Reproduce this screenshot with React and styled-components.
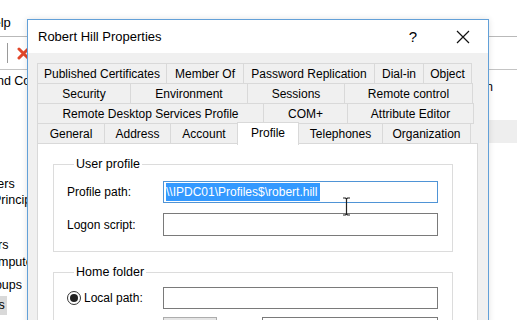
import React from 'react';
import styled, { createGlobalStyle } from 'styled-components';

const GlobalStyle = createGlobalStyle`
  html, body {
    margin: 0;
    padding: 0;
    background: #ffffff;
    overflow: hidden;
  }
  * {
    box-sizing: border-box;
  }
`;

const tabRows = [
  [
    { label: 'Published Certificates', w: 130 },
    { label: 'Member Of', w: 78 },
    { label: 'Password Replication', w: 132 },
    { label: 'Dial-in', w: 50 },
    { label: 'Object', w: 49 },
  ],
  [
    { label: 'Security', w: 94 },
    { label: 'Environment', w: 118 },
    { label: 'Sessions', w: 98 },
    { label: 'Remote control', w: 129 },
  ],
  [
    { label: 'Remote Desktop Services Profile', w: 227 },
    { label: 'COM+', w: 85 },
    { label: 'Attribute Editor', w: 127 },
  ],
  [
    { label: 'General', w: 68 },
    { label: 'Address', w: 67 },
    { label: 'Account', w: 68 },
    { label: 'Profile', w: 62, active: true },
    { label: 'Telephones', w: 85 },
    { label: 'Organization', w: 89 },
  ],
];

// tree rows of the window behind the dialog; most of each name is hidden
const treeItems = [
  { text: 'and Computers', indent: -12, gap: 3 },
  { text: 'Users', indent: -20, gap: 87 },
  { text: 'Principals', indent: -9, gap: 0 },
  { text: 'Controllers', indent: -54, gap: 29 },
  { text: 'Computers', indent: -20, gap: 1 },
  { text: 'Groups', indent: -21, gap: 7 },
  { text: 'Users', indent: -30, gap: 3, selected: true },
];

function App() {
  return (
    <>
      <GlobalStyle />
      <Screen>
        <BackWindow>
          <MenuBar>
            <MenuItem>Action</MenuItem>
            <MenuItem>View</MenuItem>
            <MenuItem>Help</MenuItem>
          </MenuBar>
          <ToolBar>
            <ToolSep />
            <DeleteIcon width="13" height="13" viewBox="0 0 13 13">
              <path d="M2 2 L11 11 M11 2 L2 11" stroke="#e2472a" strokeWidth="3" strokeLinecap="round" />
            </DeleteIcon>
          </ToolBar>
          <Panes>
            <TreePane>
              {treeItems.map((it, i) => (
                <TreeRow key={i} gap={it.gap} selected={it.selected}>
                  <TreeText indent={it.indent} selected={it.selected}>{it.text}</TreeText>
                </TreeRow>
              ))}
            </TreePane>
            <ListPane>
              <ListHeader>
                <HeaderCell w={120}>Name</HeaderCell>
                <HeaderCell w={103}>Type</HeaderCell>
                <HeaderCell>Description</HeaderCell>
              </ListHeader>
              <ListRow />
              <ListRow selected />
            </ListPane>
          </Panes>
        </BackWindow>

        <Dialog>
          <TitleBar>
            <Title>Robert Hill Properties</Title>
            <TitleButton>?</TitleButton>
            <TitleButton>
              <svg width="14" height="14" viewBox="0 0 14 14">
                <path d="M1 1 L13 13 M13 1 L1 13" stroke="#111" strokeWidth="1.2" />
              </svg>
            </TitleButton>
          </TitleBar>
          <Body>
            <Tabs>
              {tabRows.map((row, r) => (
                <TabRow key={r}>
                  {row.map((t) => (
                    <Tab key={t.label} w={t.w} active={t.active}>
                      {t.label}
                    </Tab>
                  ))}
                </TabRow>
              ))}
            </Tabs>
            <Panel>
              <Group>
                <Legend>User profile</Legend>
                <FieldRow>
                  <FieldLabel>Profile path:</FieldLabel>
                  <TextBox focused>
                    <Selected>\\IPDC01\Profiles$\robert.hill</Selected>
                  </TextBox>
                </FieldRow>
                <FieldRow tall>
                  <FieldLabel>Logon script:</FieldLabel>
                  <TextBox />
                </FieldRow>
              </Group>
              <Group home>
                <Legend>Home folder</Legend>
                <FieldRow>
                  <RadioLabel>
                    <Radio checked />
                    Local path:
                  </RadioLabel>
                  <TextBox />
                </FieldRow>
                <FieldRow>
                  <RadioLabel>
                    <Radio />
                    Connect:
                  </RadioLabel>
                  <DriveBox />
                  <ToLabel>To:</ToLabel>
                  <TextBox w={176} />
                </FieldRow>
              </Group>
            </Panel>
          </Body>
        </Dialog>

        <IBeam width="9" height="19" viewBox="0 0 9 19">
          <path d="M1 1 H3.5 L4.5 2 L5.5 1 H8 M4.5 2 V17 M1 18 H3.5 L4.5 17 L5.5 18 H8" stroke="#222" strokeWidth="1.2" fill="none" />
        </IBeam>
      </Screen>
    </>
  );
}

const Screen = styled.div`
  position: relative;
  width: 517px;
  height: 320px;
  overflow: hidden;
  font-family: 'Liberation Sans', Arial, sans-serif;
  font-size: 12px;
  color: #000;
`;

const BackWindow = styled.div`
  width: 517px;
  height: 320px;
  display: flex;
  flex-direction: column;
  background: #fff;
`;

const MenuBar = styled.div`
  height: 37px;
  display: flex;
  align-items: center;
  gap: 12px;
  padding-top: 8px;
  margin-left: -104px;
  border-bottom: 1px solid #b9b9b9;
  font-size: 13px;
`;

const MenuItem = styled.span`
  white-space: nowrap;
`;

const ToolBar = styled.div`
  height: 33px;
  display: flex;
  align-items: center;
  padding-left: 7px;
  gap: 9px;
  border-bottom: 1px solid #c4c4c4;
`;

const ToolSep = styled.div`
  width: 1px;
  height: 20px;
  background: #9a9a9a;
`;

const DeleteIcon = styled.svg`
  display: block;
`;

const Panes = styled.div`
  flex: 1;
  display: flex;
`;

const TreePane = styled.div`
  width: 210px;
  display: flex;
  flex-direction: column;
  overflow: hidden;
  font-size: 12.5px;
`;

const TreeRow = styled.div`
  height: ${(p) => (p.selected ? 19 : 16)}px;
  margin-top: ${(p) => p.gap}px;
  display: flex;
  align-items: center;
`;

const TreeText = styled.span`
  margin-left: ${(p) => p.indent}px;
  padding: 0 2px;
  white-space: nowrap;
  line-height: 19px;
  background: ${(p) => (p.selected ? '#d9d9d9' : 'transparent')};
`;

const ListPane = styled.div`
  flex: 1;
  display: flex;
  flex-direction: column;
  padding-top: 7px;
`;

const ListHeader = styled.div`
  height: 20px;
  display: flex;
  align-items: center;
`;

const HeaderCell = styled.div`
  width: ${(p) => (p.w ? `${p.w}px` : 'auto')};
  flex: ${(p) => (p.w ? 'none' : '1')};
  white-space: nowrap;
  font-size: 12px;
`;

const ListRow = styled.div`
  height: 23px;
  background: ${(p) => (p.selected ? '#eeeeee' : 'transparent')};
`;

const Dialog = styled.div`
  position: absolute;
  left: 27px;
  top: 19px;
  width: 462px;
  height: 320px;
  border: 1px solid #62a0d8;
  background: #f0f0f0;
  display: flex;
  flex-direction: column;
  box-shadow: 0 0 6px rgba(0, 0, 0, 0.12);
`;

const TitleBar = styled.div`
  height: 33px;
  background: #fff;
  display: flex;
  align-items: center;
`;

const Title = styled.div`
  flex: 1;
  padding-left: 10px;
  font-size: 13px;
  padding-bottom: 1px;
`;

const TitleButton = styled.div`
  width: 50px;
  height: 33px;
  display: flex;
  align-items: center;
  justify-content: center;
  font-size: 15px;
`;

const Body = styled.div`
  flex: 1;
  padding: 10px 0 0 9px;
  display: flex;
  flex-direction: column;
`;

const Tabs = styled.div`
  display: flex;
  flex-direction: column;
  width: 439px;
`;

const TabRow = styled.div`
  height: 20px;
  display: flex;
  align-items: flex-end;
`;

const Tab = styled.div`
  width: ${(p) => p.w}px;
  height: ${(p) => (p.active ? 23 : 21)}px;
  margin-bottom: ${(p) => (p.active ? -2 : -1)}px;
  margin-right: -1px;
  border: 1px solid #d9d9d9;
  border-bottom: ${(p) => (p.active ? 'none' : '1px solid #d9d9d9')};
  background: ${(p) => (p.active ? '#fff' : '#f0f0f0')};
  position: relative;
  z-index: ${(p) => (p.active ? 2 : 1)};
  display: flex;
  align-items: ${(p) => (p.active ? 'flex-start' : 'center')};
  justify-content: center;
  padding-top: ${(p) => (p.active ? 3 : 0)}px;
  white-space: nowrap;
  font-size: 12px;
`;

const Panel = styled.div`
  flex: 1;
  width: 441px;
  background: #fff;
  border: 1px solid #d9d9d9;
  padding: 13px 24px 0 15px;
  display: flex;
  flex-direction: column;
`;

const Group = styled.fieldset`
  margin: ${(p) => (p.home ? '13px 0 0 0' : '0')};
  border: 1px solid #dcdcdc;
  padding: ${(p) => (p.home ? '8px 0 15px 13px' : '10px 0 15px 13px')};
  display: flex;
  flex-direction: column;
  gap: ${(p) => (p.home ? 8 : 10)}px;
`;

const Legend = styled.legend`
  margin-left: 7px;
  padding: 0 2px;
  font-size: 12.5px;
  line-height: 14px;
`;

const FieldRow = styled.div`
  display: flex;
  align-items: center;
  height: ${(p) => (p.tall ? 23 : 22)}px;
`;

const FieldLabel = styled.div`
  width: 96px;
  white-space: nowrap;
`;

const RadioLabel = styled.div`
  width: 96px;
  display: flex;
  align-items: center;
  gap: 3px;
  white-space: nowrap;
`;

const Radio = styled.span`
  width: 14px;
  height: 14px;
  border-radius: 50%;
  border: 1px solid #333;
  display: flex;
  align-items: center;
  justify-content: center;
  &::after {
    content: '';
    width: 8px;
    height: 8px;
    border-radius: 50%;
    background: ${(p) => (p.checked ? '#222' : 'transparent')};
  }
`;

const TextBox = styled.div`
  width: ${(p) => p.w || 275}px;
  height: 100%;
  border: 1px solid ${(p) => (p.focused ? '#4f94d6' : '#7a7a7a')};
  background: #fff;
  display: flex;
  align-items: center;
  padding-left: 2px;
`;

const DriveBox = styled.div`
  width: 54px;
  height: 100%;
  border: 1px solid #adadad;
  background: #e5e5e5;
`;

const ToLabel = styled.div`
  width: 45px;
  padding-left: 14px;
`;

const Selected = styled.span`
  background: #3399ff;
  color: #fff;
  line-height: 18px;
  padding: 0 3px 0 0;
  white-space: nowrap;
`;

const IBeam = styled.svg`
  position: absolute;
  left: 342px;
  top: 197px;
`;

export default App;
